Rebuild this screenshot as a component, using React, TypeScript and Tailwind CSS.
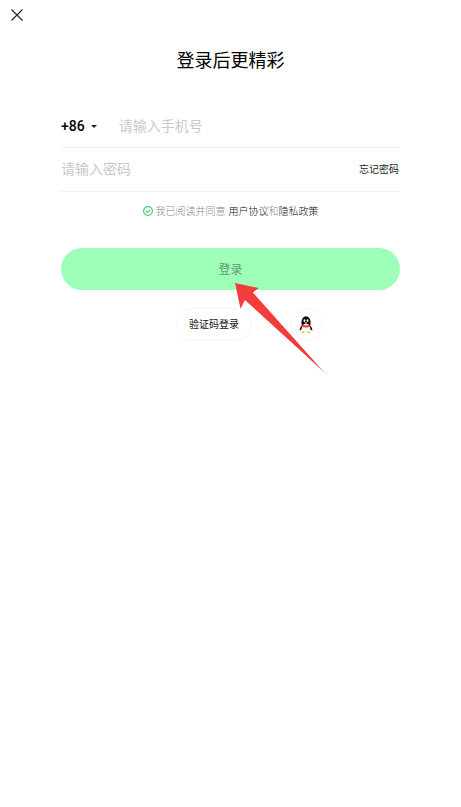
const cjk = "font-['Roboto','Noto_Sans_CJK_SC',sans-serif]"

function QQIcon() {
  return (
    <svg width="14" height="18" viewBox="0 0 14 18">
      <ellipse cx="7" cy="6.4" rx="4.6" ry="6.2" fill="#111" />
      <path d="M3 9 Q0.4 12 0.6 14.6 Q2 14.4 3 12.8Z M11 9 Q13.6 12 13.4 14.6 Q12 14.4 11 12.8Z" fill="#111" />
      <ellipse cx="7" cy="12.2" rx="4.2" ry="4.4" fill="#f7f7f7" />
      <path d="M2.6 8.4 Q7 10.6 11.4 8.4 L11.8 10.4 Q7 12.6 2.2 10.4Z" fill="#e8372c" />
      <ellipse cx="5.5" cy="4.6" rx="0.9" ry="1.3" fill="#fff" />
      <ellipse cx="8.5" cy="4.6" rx="0.9" ry="1.3" fill="#fff" />
      <path d="M5.2 6.6 Q7 5.7 8.8 6.6 L7 7.9Z" fill="#f5b21a" />
      <path d="M2 16 Q4 15 6 16.6 Q4 17.8 2 16Z M12 16 Q10 15 8 16.6 Q10 17.8 12 16Z" fill="#f5b21a" />
    </svg>
  )
}

export default function App() {
  return (
    <div className={`relative min-h-[807px] w-[461px] bg-white ${cjk}`}>
      <div className="px-[11px] pt-[9px]">
        <svg width="12" height="12" viewBox="0 0 12 12" fill="none" stroke="#222" strokeWidth="1.1">
          <path d="M0.5 0.5 L11.5 11.5 M11.5 0.5 L0.5 11.5" />
        </svg>
      </div>
      <h1 className="mt-[26px] text-center text-[18px] leading-[27px] text-black">登录后更精彩</h1>

      <div className="mx-[61px] mt-[30px] w-[339px]">
        <div className="flex h-[44px] items-center border-b border-[#f0f0f0] pt-[1px]">
          <span className="text-[14px] font-medium text-black">+86</span>
          <span className="ml-[6px] h-0 w-0 border-x-[3px] border-t-[3px] border-x-transparent border-t-[#222]" />
          <span className="ml-[22px] text-[14px] text-[#c8c8c8]">请输入手机号</span>
        </div>
        <div className="flex h-[44px] items-center justify-between border-b border-[#f0f0f0] pr-[1px]">
          <span className="text-[14px] text-[#c8c8c8]">请输入密码</span>
          <span className="text-[10px] text-[#222]">忘记密码</span>
        </div>
        <div className="mt-[11px] flex h-[16px] items-center justify-center text-[10px] font-light">
          <svg width="10" height="10" viewBox="0 0 10 10" fill="none" stroke="#45c973" strokeWidth="1.2">
            <circle cx="5" cy="5" r="4.4" />
            <path d="M2.9 5.1 L4.5 6.6 L7.1 3.7" />
          </svg>
          <span className="ml-[3px] text-[#8a8a8a]">我已阅读并同意</span>
          <span className="ml-[3px] text-[#111]">用户协议</span>
          <span className="text-[#8a8a8a]">和</span>
          <span className="text-[#111]">隐私政策</span>
        </div>
        <div className="mt-[29px] flex h-[42px] items-center justify-center rounded-full bg-[#9effb9] pt-[1px] text-[12px] text-[#5f9a70]">
          登录
        </div>
      </div>

      <div className="mt-[18px] flex items-center pl-[176px]">
        <div className="flex h-[33px] w-[76px] items-center justify-center rounded-full border border-[#f5f5f5] text-[10px] text-[#111]">
          验证码登录
        </div>
        <div className="ml-[38px] flex h-[33px] w-[33px] items-center justify-center rounded-full border border-[#f5f5f5] pr-[2px]">
          <QQIcon />
        </div>
      </div>

      {/* red annotation arrow over the button */}
      <svg className="absolute left-[230px] top-[278px]" width="100" height="100" viewBox="0 0 100 100">
        <path d="M5 5 L29 10 L23 14.5 L95 95 L15 22 L10.5 31 Z" fill="#f33c3c" transform="translate(0.1 0.1) scale(0.99)" />
      </svg>
    </div>
  )
}
